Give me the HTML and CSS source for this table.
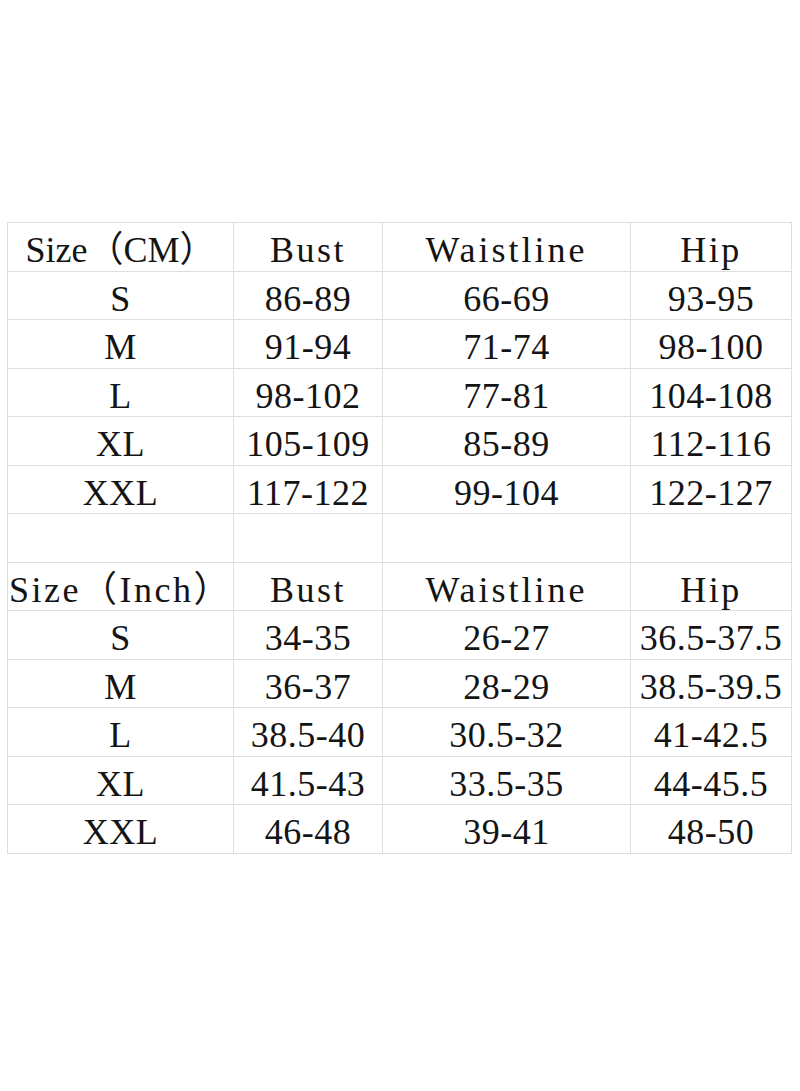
FILE: index.html
```html
<!DOCTYPE html>
<html lang="en">
<head>
<meta charset="utf-8">
<title>Size Chart</title>
<link rel="stylesheet" href="styles.css">
</head>
<body>
<div class="chart">
  <div class="cell head head-tight">Size（CM）</div><div class="cell head">Bust</div><div class="cell head head-wide">Waistline</div><div class="cell head">Hip</div>
  <div class="cell">S</div><div class="cell">86-89</div><div class="cell">66-69</div><div class="cell">93-95</div>
  <div class="cell">M</div><div class="cell">91-94</div><div class="cell">71-74</div><div class="cell">98-100</div>
  <div class="cell">L</div><div class="cell">98-102</div><div class="cell">77-81</div><div class="cell">104-108</div>
  <div class="cell">XL</div><div class="cell">105-109</div><div class="cell">85-89</div><div class="cell">112-116</div>
  <div class="cell">XXL</div><div class="cell">117-122</div><div class="cell">99-104</div><div class="cell">122-127</div>
  <div class="cell"></div><div class="cell"></div><div class="cell"></div><div class="cell"></div>
  <div class="cell head">Size（Inch）</div><div class="cell head">Bust</div><div class="cell head head-wide">Waistline</div><div class="cell head">Hip</div>
  <div class="cell">S</div><div class="cell">34-35</div><div class="cell">26-27</div><div class="cell">36.5-37.5</div>
  <div class="cell">M</div><div class="cell">36-37</div><div class="cell">28-29</div><div class="cell">38.5-39.5</div>
  <div class="cell">L</div><div class="cell">38.5-40</div><div class="cell">30.5-32</div><div class="cell">41-42.5</div>
  <div class="cell">XL</div><div class="cell">41.5-43</div><div class="cell">33.5-35</div><div class="cell">44-45.5</div>
  <div class="cell">XXL</div><div class="cell">46-48</div><div class="cell">39-41</div><div class="cell">48-50</div>
</div>
</body>
</html>
```

FILE: styles.css
```css
html, body {
  margin: 0;
  padding: 0;
  background: #ffffff;
}

body {
  width: 800px;
  height: 1091px;
  overflow: hidden;
}

.chart {
  margin: 222px 0 0 7px;
  display: grid;
  grid-template-columns: 226px 149px 248px 161px;
  grid-auto-rows: 48.5px;
  border-top: 1px solid #dedede;
  border-left: 1px solid #dedede;
  width: max-content;
  font-family: "Liberation Serif", "Noto Sans CJK SC", serif;
  font-size: 36px;
  color: #141414;
}

.cell {
  box-sizing: border-box;
  border-right: 1px solid #dedede;
  border-bottom: 1px solid #dedede;
  padding-top: 7px;
  line-height: 41px;
  text-align: center;
  white-space: nowrap;
  overflow: hidden;
  letter-spacing: 0.5px;
}

.head {
  letter-spacing: 2.5px;
}

.head-tight {
  letter-spacing: 0;
}

.head-wide {
  letter-spacing: 3px;
}
```
